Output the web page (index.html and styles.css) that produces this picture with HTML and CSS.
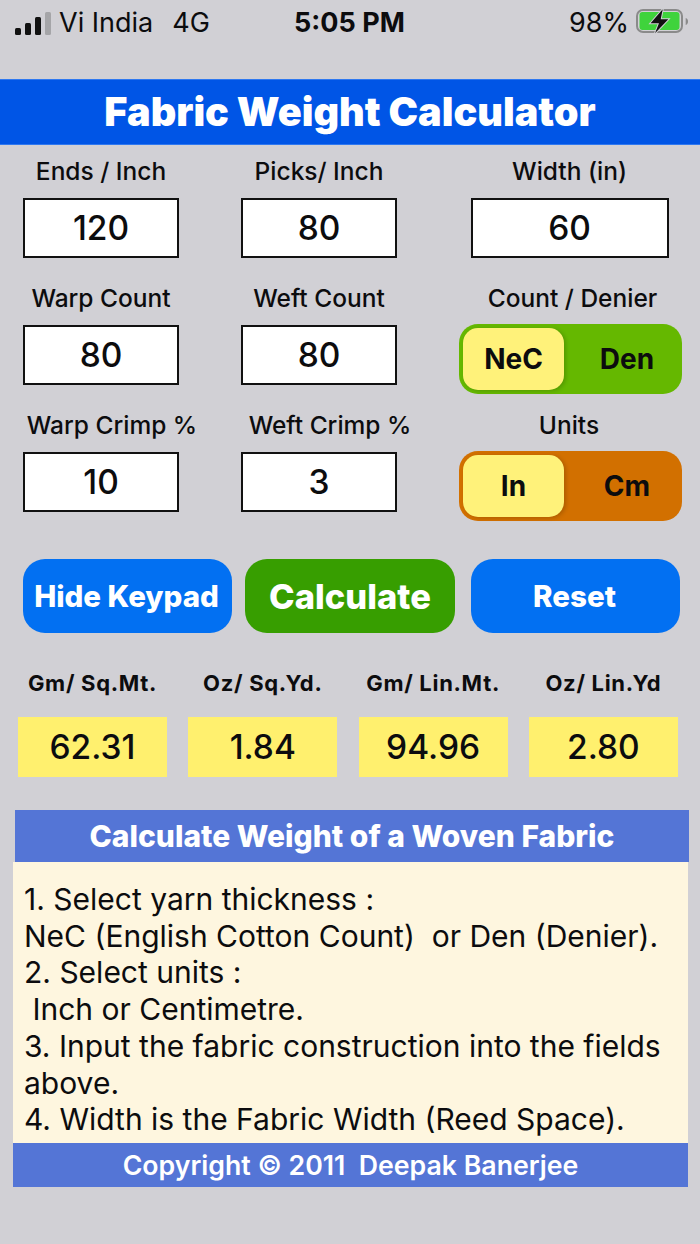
FILE: index.html
```html
<!DOCTYPE html>
<html lang="en">
<head>
<meta charset="utf-8">
<title>Fabric Weight Calculator</title>
<link rel="stylesheet" href="styles.css">
</head>
<body>
<div class="status">
  <div class="status-left">
    <svg class="signal" width="36" height="23" viewBox="0 0 36 23">
      <rect x="0" y="16" width="6" height="7" rx="1.500" fill="#111"/>
      <rect x="10" y="11" width="6" height="12" rx="1.500" fill="#111"/>
      <rect x="20" y="5" width="6" height="18" rx="1.500" fill="#111"/>
      <rect x="30" y="0" width="6" height="23" rx="1.500" fill="#a5a5a8"/>
    </svg>
    <span class="carrier">Vi India</span>
    <span class="net">4G</span>
  </div>
  <div class="clock">5:05 PM</div>
  <div class="status-right">
    <span class="pct">98%</span>
    <svg class="battery" width="52" height="27" viewBox="0 0 52 27">
      <rect x="1" y="2" width="45" height="22" rx="6" fill="none" stroke="#8a8a8a" stroke-width="2"/>
      <rect x="3.500" y="4" width="40" height="18" rx="3" fill="#3fd33c"/>
      <path d="M49.700 10c1.500.4 2.300 1.700 2.300 3.500s-.8 3.100-2.300 3.500z" fill="#8a8a8a"/>
      <path d="M26.700 1.300 14.600 15.300H23L19 25.300 32.300 11.300H24.700z" fill="#111" stroke="#d1d0d5" stroke-width="2" paint-order="stroke"/>
    </svg>
  </div>
</div>

<h1 class="title">Fabric Weight Calculator</h1>

<div class="form">
  <div class="cell"><label class="lbl">Ends / Inch</label><div class="field">120</div></div>
  <div class="cell"><label class="lbl">Picks/ Inch</label><div class="field">80</div></div>
  <div class="cell"><label class="lbl lbl-width">Width (in)</label><div class="field field-wide">60</div></div>

  <div class="cell"><label class="lbl">Warp Count</label><div class="field">80</div></div>
  <div class="cell"><label class="lbl">Weft Count</label><div class="field">80</div></div>
  <div class="cell"><label class="lbl lbl-count">Count / Denier</label>
    <div class="toggle toggle-green"><span class="opt opt-on">NeC</span><span class="opt opt-off">Den</span></div>
  </div>

  <div class="cell"><label class="lbl lbl-crimp">Warp Crimp %</label><div class="field">10</div></div>
  <div class="cell"><label class="lbl lbl-crimp">Weft Crimp %</label><div class="field">3</div></div>
  <div class="cell"><label class="lbl lbl-units">Units</label>
    <div class="toggle toggle-orange"><span class="opt opt-on">In</span><span class="opt opt-off">Cm</span></div>
  </div>
</div>

<div class="actions">
  <button class="btn btn-blue btn-hide">Hide Keypad</button>
  <button class="btn btn-green">Calculate</button>
  <button class="btn btn-blue btn-reset">Reset</button>
</div>

<div class="results">
  <div class="res"><div class="res-lbl">Gm/ Sq.Mt.</div><div class="res-val">62.31</div></div>
  <div class="res"><div class="res-lbl">Oz/ Sq.Yd.</div><div class="res-val">1.84</div></div>
  <div class="res"><div class="res-lbl">Gm/ Lin.Mt.</div><div class="res-val">94.96</div></div>
  <div class="res"><div class="res-lbl">Oz/ Lin.Yd</div><div class="res-val">2.80</div></div>
</div>

<div class="info">
  <h2 class="info-head">Calculate Weight of a Woven Fabric</h2>
  <div class="info-body">
    <p>1. Select yarn thickness :</p>
    <p>NeC (English Cotton Count)&nbsp; or Den (Denier).</p>
    <p>2. Select units :</p>
    <p>&nbsp;Inch or Centimetre.</p>
    <p>3. Input the fabric construction into the fields above.</p>
    <p>4. Width is the Fabric Width (Reed Space).</p>
  </div>
  <div class="info-foot">Copyright © 2011&nbsp; Deepak Banerjee</div>
</div>
</body>
</html>
```
FILE: styles.css
```css
* { box-sizing: border-box; }
html, body { margin: 0; padding: 0; }
body {
  width: 700px;
  height: 1244px;
  overflow: hidden;
  background: #d1d0d5;
  color: #0c0c0e;
  font-family: Inter, "Liberation Sans", sans-serif;
}
.status {
  height: 79px;
  padding: 8px 12px 0 15px;
  display: flex;
  align-items: flex-start;
  justify-content: space-between;
  position: relative;
  font-size: 27px;
  line-height: 30px;
}
.status-left { display: flex; align-items: center; height: 30px; }
.signal { margin-right: 8px; }
.carrier { margin-right: 19px; }
.clock {
  position: absolute;
  left: 294px;
  top: 8px;
  font-weight: 700;
  font-size: 27px;
}
.status-right { display: flex; align-items: flex-start; height: 30px; gap: 7px; }
.title {
  margin: 0;
  height: 66px;
  background: #0055e6;
  border-top: 1px solid #2f78f0;
  border-bottom: 1px solid #2f78f0;
  color: #fff;
  font-size: 39.600px;
  font-weight: 900;
  line-height: 64px;
  text-align: center;
}
.form {
  display: grid;
  grid-template-columns: 156px 156px 223px;
  column-gap: 62px;
  row-gap: 13px;
  padding: 13px 0 0 23px;
  grid-auto-rows: 114px;
}
.cell { display: flex; flex-direction: column; align-items: center; }
.lbl {
  height: 27px;
  line-height: 27px;
  margin-bottom: 13px;
  font-size: 24.500px;
  font-weight: 500;
  white-space: nowrap;
}
.lbl-crimp { margin-left: 22px; }
.lbl-count { margin-left: 4px; }
.lbl-units { margin-right: 3px; }
.lbl-width { margin-right: 2px; }
.field {
  width: 100%;
  height: 60px;
  background: #fff;
  border: 2px solid #111;
  font-size: 33.500px;
  font-weight: 500;
  display: flex;
  align-items: center;
  justify-content: center;
}
.field-wide { width: 198px; margin-right: 2px; }
.toggle {
  width: 100%;
  height: 70px;
  margin-top: -1px;
  border-radius: 19px;
  padding: 4px;
  display: grid;
  grid-template-columns: 101px 1fr;
  font-size: 28px;
  font-weight: 700;
}
.toggle-green { background: #65b800; }
.toggle-orange { background: #d27000; }
.opt { display: flex; align-items: center; justify-content: center; }
.opt-off { padding-left: 12px; }
.opt-on {
  background: #fff27a;
  border-radius: 15px;
  box-shadow: 2px 1px 4px rgba(0, 0, 0, .18);
}
.actions {
  display: flex;
  padding: 33px 0 0 23px;
}
.btn {
  height: 74px;
  border: 0;
  border-radius: 22px;
  color: #fff;
  font-family: inherit;
  font-weight: 800;
  font-size: 29.500px;
  padding: 0 2px 0 0;
  white-space: nowrap;
}
.btn-blue { background: #0270f2; }
.btn-green { background: #379e00; font-size: 34.500px; width: 210px; margin: 0 16px 0 13px; padding: 0; }
.btn-hide { width: 209px; }
.btn-reset { width: 209px; }
.results {
  display: grid;
  grid-template-columns: repeat(4, 149px);
  column-gap: 21.300px;
  padding: 37px 0 0 18px;
}
.res { display: flex; flex-direction: column; align-items: center; }
.res-lbl {
  height: 26px;
  line-height: 26px;
  font-size: 22px;
  font-weight: 700;
  letter-spacing: .7px;
  margin-bottom: 21px;
  white-space: nowrap;
}
.res-val {
  width: 100%;
  height: 60px;
  background: #fff06e;
  font-size: 33.500px;
  font-weight: 500;
  display: flex;
  align-items: center;
  justify-content: center;
}
.info { margin: 33px 12px 0 13px; }
.info-head {
  margin: 0 -1px 0 2px;
  height: 52px;
  background: #5475d6;
  color: #fff;
  font-size: 30px;
  font-weight: 800;
  line-height: 52px;
  text-align: center;
}
.info-body {
  height: 281px;
  background: #fef6df;
  padding: 19px 10px 0 11px;
  font-size: 30px;
  line-height: 36.700px;
}
.info-body p { margin: 0; }
.info-foot {
  height: 44px;
  background: #5475d6;
  color: #fff;
  font-size: 26.700px;
  font-weight: 600;
  line-height: 44px;
  text-align: center;
}
```
